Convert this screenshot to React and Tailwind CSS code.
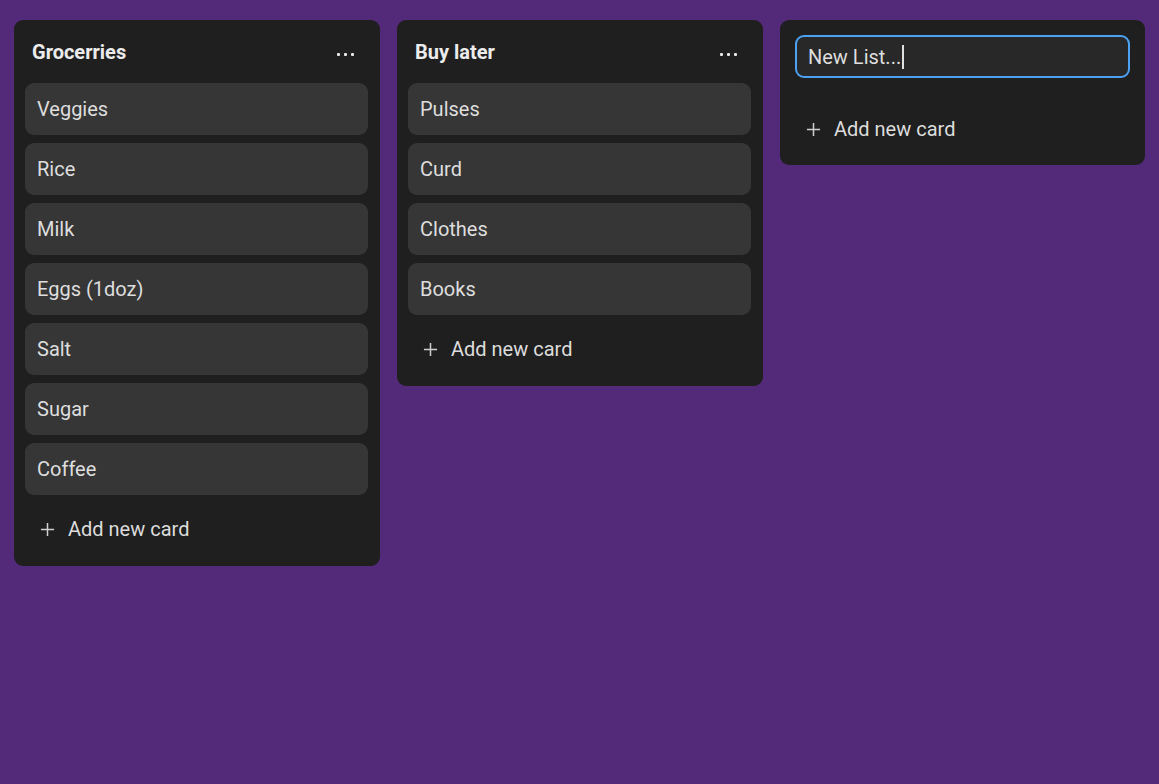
import { useState } from 'react';

const initialLists = [
  { id: 1, title: 'Grocerries', cards: ['Veggies', 'Rice', 'Milk', 'Eggs (1doz)', 'Salt', 'Sugar', 'Coffee'] },
  { id: 2, title: 'Buy later', cards: ['Pulses', 'Curd', 'Clothes', 'Books'] },
];

const PlusIcon = () => (
  <svg className="w-[15px] h-[15px] text-[#cfcfcf]" viewBox="0 0 16 16" fill="none" stroke="currentColor" strokeWidth={1.6}>
    <path d="M8 1v14M1 8h14" />
  </svg>
);

const AddCard = ({ className = '' }) => (
  <button className={`h-[52px] w-full flex items-center gap-[13px] pl-[15px] text-[20px] text-[#dcdcdc] rounded-lg hover:bg-white/5 ${className}`}>
    <PlusIcon />
    <span>Add new card</span>
  </button>
);

const List = ({ list }) => (
  <div className="w-[366px] shrink-0 bg-[#1f1f1f] rounded-[9px] pt-[11px] pb-[11px] pl-[11px] pr-[12px] flex flex-col">
    <div className="h-[44px] flex items-center justify-between pl-[7px] pr-[14px] pb-[2px] mb-[8px]">
      <h2 className="text-[20px] font-bold text-[#ececec]">{list.title}</h2>
      <button className="flex items-center gap-[4px] pt-[4px]">
        <span className="w-[3px] h-[3px] bg-[#e8e8e8] rounded-[1px]"></span>
        <span className="w-[3px] h-[3px] bg-[#e8e8e8] rounded-[1px]"></span>
        <span className="w-[3px] h-[3px] bg-[#e8e8e8] rounded-[1px]"></span>
      </button>
    </div>
    <div className="flex flex-col gap-[8px]">
      {list.cards.map((card) => (
        <div key={card} className="h-[52px] bg-[#363636] rounded-[9px] px-[12px] flex items-center text-[20px] text-[#dedede]">
          {card}
        </div>
      ))}
      <AddCard />
    </div>
  </div>
);

const App = () => {
  const [lists] = useState(initialLists);

  return (
    <div className="min-h-screen bg-[#532a7a] pt-[20px] pl-[14px] flex items-start gap-[17px]" style={{ fontFamily: 'Roboto, "Noto Sans", sans-serif' }}>
      {lists.map((list) => (
        <List key={list.id} list={list} />
      ))}

      <div className="w-[365px] shrink-0 bg-[#1f1f1f] rounded-[9px] pt-[15px] pb-[10px] px-[11px] flex flex-col">
        <div className="mx-[4px] h-[43px] border-[2.5px] border-[#4ba2f2] bg-[#282828] rounded-[9px] flex items-center pl-[11px] text-[20px] text-[#dedede]">
          <span>New List...</span>
          <span className="w-[1.5px] h-[24px] bg-[#e0e0e0] ml-[1px]"></span>
        </div>
        <AddCard className="mt-[25px]" />
      </div>
    </div>
  );
};

export default App;
